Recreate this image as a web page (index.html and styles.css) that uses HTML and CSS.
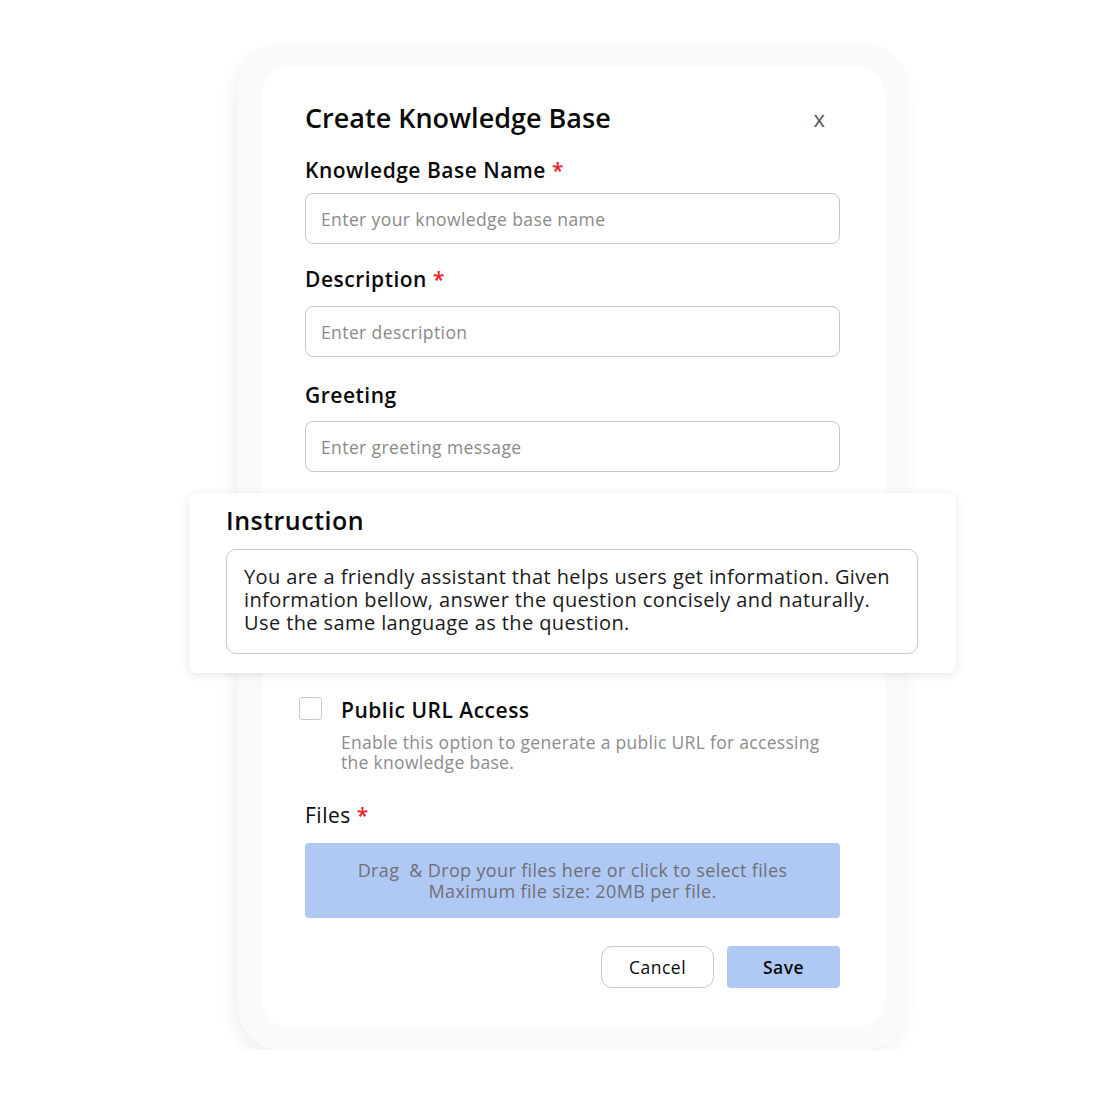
FILE: index.html
```html
<!DOCTYPE html>
<html lang="en">
<head>
<meta charset="utf-8">
<title>Create Knowledge Base</title>
<link rel="stylesheet" href="styles.css">
</head>
<body>
<div class="page">
  <div class="frame">
    <div class="card">
      <div class="header">
        <h1 class="title">Create Knowledge Base</h1>
        <span class="close">x</span>
      </div>

      <div class="field f-name">
        <label class="label">Knowledge Base Name <span class="req">*</span></label>
        <div class="input">Enter your knowledge base name</div>
      </div>

      <div class="field f-desc">
        <label class="label">Description <span class="req">*</span></label>
        <div class="input">Enter description</div>
      </div>

      <div class="field f-greet">
        <label class="label">Greeting</label>
        <div class="input">Enter greeting message</div>
      </div>

      <div class="instruction">
        <div class="ins-label">Instruction</div>
        <div class="textarea">You are a friendly assistant that helps users get information. Given information bellow, answer the question concisely and naturally. Use the same language as the question.</div>
      </div>

      <div class="public">
        <span class="checkbox"></span>
        <div class="public-text">
          <div class="public-title">Public URL Access</div>
          <div class="public-desc">Enable this option to generate a public URL for accessing the knowledge base.</div>
        </div>
      </div>

      <div class="field f-files">
        <label class="label files-label">Files <span class="req">*</span></label>
        <div class="dropzone">
          <p class="drop-text">Drag&nbsp; &amp; Drop your files here or click to select files Maximum file size: 20MB per file.</p>
        </div>
      </div>

      <div class="actions">
        <button class="btn btn-cancel">Cancel</button>
        <button class="btn btn-save">Save</button>
      </div>
    </div>
  </div>
</div>
</body>
</html>
```

FILE: styles.css
```css
* { box-sizing: border-box; }
html, body { margin: 0; padding: 0; background: #ffffff; }
body {
  font-family: "Open Sans", "Noto Sans", sans-serif;
  color: #111;
}
.page {
  padding: 44px 0 0 238px;
}
.frame {
  width: 670px;
  height: 1006px;
  background: #fafafa;
  border-radius: 44px;
  box-shadow: -4px 8px 18px rgba(0,0,0,0.06);
  padding: 22px 23px 0 24px;
}
.card {
  width: 623px;
  height: 962px;
  background: #ffffff;
  border-radius: 30px;
  padding: 34px 45px 40px 43px;
  display: flex;
  flex-direction: column;
}
.header {
  display: flex;
  justify-content: space-between;
  align-items: center;
  height: 36px;
}
.title {
  margin: 0;
  font-size: 27px;
  font-weight: 600;
  line-height: 36px;
  color: #0a0a0a;
}
.close {
  font-size: 22px;
  color: #555;
  margin-right: 15px;
  line-height: 36px;
}
.field { display: flex; flex-direction: column; }
.label {
  font-size: 21px;
  font-weight: 600;
  letter-spacing: 0.5px;
  line-height: 28px;
  color: #0a0a0a;
}
.req { color: #e8232a; font-weight: 600; }
.f-name { margin-top: 20px; }
.f-name .label { margin-bottom: 9px; }
.f-desc { margin-top: 21px; }
.f-desc .label { margin-bottom: 13px; }
.f-greet { margin-top: 24px; }
.f-greet .label { margin-bottom: 12px; }
.input {
  height: 51px;
  border: 1.5px solid #c9c9c9;
  border-radius: 8px;
  padding: 0 15px;
  display: flex;
  align-items: center;
  font-size: 17.5px;
  letter-spacing: 0.4px;
  color: #8a8a8a;
}
.instruction {
  margin: 21px -116px 0 -116px;
  height: 180px;
  background: #ffffff;
  border-radius: 8px;
  box-shadow: 0 2px 10px rgba(0,0,0,0.10);
  padding: 12px 38px 19px 37px;
  display: flex;
  flex-direction: column;
}
.ins-label {
  font-size: 25px;
  font-weight: 600;
  letter-spacing: 0.5px;
  line-height: 30px;
  color: #0a0a0a;
  margin-bottom: 14px;
}
.textarea {
  flex: 1;
  border: 1.5px solid #c9c9c9;
  border-radius: 10px;
  padding: 15px 16px 0 17px;
  font-size: 20px;
  letter-spacing: 0.4px;
  line-height: 23px;
  color: #1a1a1a;
}
.public {
  margin-top: 24px;
  margin-left: -6px;
  display: flex;
  gap: 19px;
}
.checkbox {
  flex: none;
  width: 23px;
  height: 23px;
  border: 1.5px solid #c9c9c9;
  border-radius: 3px;
  background: #fff;
}
.public-text { display: flex; flex-direction: column; margin-top: 0; }
.public-title {
  font-size: 21px;
  font-weight: 600;
  letter-spacing: 0.5px;
  line-height: 26px;
  color: #0a0a0a;
}
.public-desc {
  margin-top: 9px;
  font-size: 17.5px;
  letter-spacing: 0.3px;
  line-height: 20px;
  color: #8c8c8c;
  width: 495px;
}
.f-files { margin-top: 29px; }
.files-label { font-weight: 500; margin-bottom: 14px; }
.dropzone {
  height: 75px;
  background: #afc9f4;
  border-radius: 4px;
  display: flex;
  align-items: center;
  justify-content: center;
}
.drop-text {
  margin: 0;
  width: 445px;
  font-size: 18px;
  letter-spacing: 0.35px;
  line-height: 21px;
  color: #6f6f76;
  text-align: center;
}
.actions {
  margin-top: 28px;
  display: flex;
  justify-content: flex-end;
  gap: 13px;
}
.btn {
  width: 113px;
  height: 42px;
  font-family: "Open Sans", "Noto Sans", sans-serif;
  font-size: 17.5px;
  letter-spacing: 0.5px;
  font-weight: 500;
  color: #0a0a0a;
  cursor: pointer;
}
.btn-cancel {
  background: #fff;
  border: 1.5px solid #c9c9c9;
  border-radius: 11px;
}
.btn-save {
  background: #afc9f4;
  border: none;
  border-radius: 4px;
  font-weight: 600;
}
```
